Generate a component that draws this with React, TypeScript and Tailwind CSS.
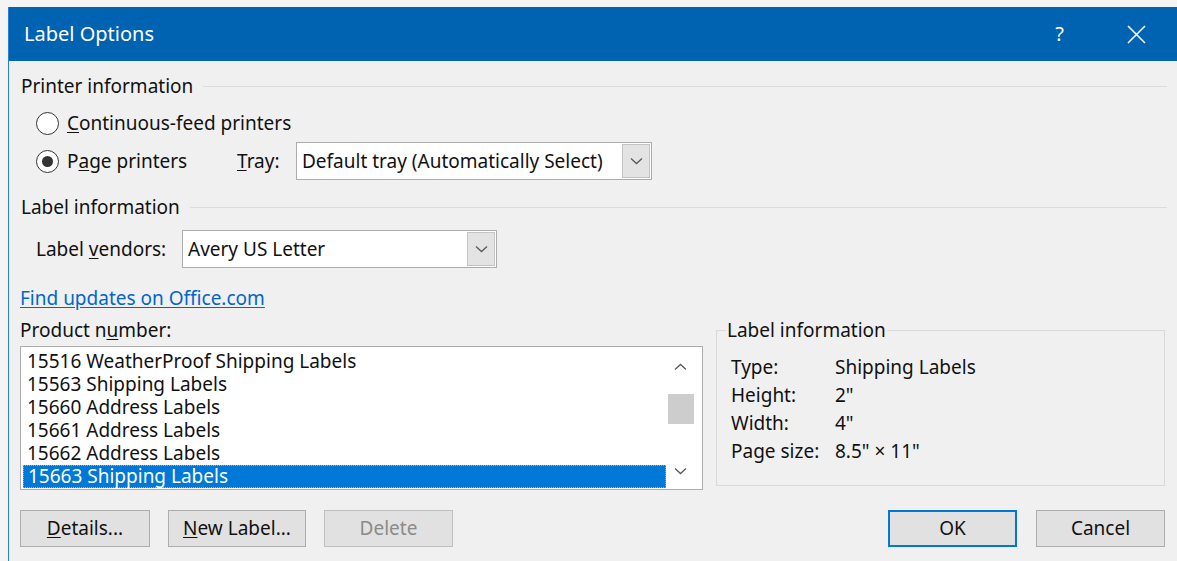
import { ReactNode } from "react";

const products = [
  "15516 WeatherProof Shipping Labels",
  "15563 Shipping Labels",
  "15660 Address Labels",
  "15661 Address Labels",
  "15662 Address Labels",
  "15663 Shipping Labels",
];

const details = [
  { label: "Type:", value: "Shipping Labels" },
  { label: "Height:", value: "2\"" },
  { label: "Width:", value: "4\"" },
  { label: "Page size:", value: "8.5\" × 11\"" },
];

const Chevron = ({ up = false }: { up?: boolean }) => (
  <svg width="13" height="8" viewBox="0 0 13 8" className={up ? "rotate-180" : ""}>
    <path d="M1 1.5 L6.5 6.5 L12 1.5" fill="none" stroke="#5a5a5a" strokeWidth="1.3" />
  </svg>
);

const SectionHeader = ({ title }: { title: string }) => (
  <div className="flex h-[24px] items-center gap-[10px] pl-[1px]">
    <span className="whitespace-nowrap">{title}</span>
    <div className="h-px flex-1 bg-[#dcdcdc]" />
  </div>
);

const Radio = ({ checked, children }: { checked?: boolean; children: ReactNode }) => (
  <div className="flex items-center gap-[8px]">
    <span className="flex h-[23px] w-[23px] items-center justify-center rounded-full border border-[#333] bg-white">
      {checked && <span className="h-[11px] w-[11px] rounded-full bg-[#333]" />}
    </span>
    <span className="whitespace-nowrap">{children}</span>
  </div>
);

const ComboBox = ({ value, width }: { value: string; width: string }) => (
  <div className={`flex h-[38px] ${width} border border-[#adadad] bg-white`}>
    <div className="flex flex-1 items-center pl-[5px] whitespace-nowrap">{value}</div>
    <div className="m-[1px] flex w-[28px] items-center justify-center border border-[#c4c4c4] bg-[#e3e3e3]">
      <Chevron />
    </div>
  </div>
);

const Button = ({
  children,
  width,
  primary,
  disabled,
}: {
  children: ReactNode;
  width: string;
  primary?: boolean;
  disabled?: boolean;
}) => (
  <button
    className={`flex h-[37px] ${width} items-center justify-center bg-[#e1e1e1] ${
      primary
        ? "border-2 border-[#0078d7]"
        : disabled
        ? "border border-[#bfbfbf] text-[#8a8a8a]"
        : "border border-[#adadad]"
    }`}
  >
    {children}
  </button>
);

export default function App() {
  return (
    <div className="h-[561px] w-[1177px] overflow-hidden bg-[#f4f4f4] pl-[8px] pt-[7px] font-['Noto_Sans','Open_Sans',sans-serif] text-[19px] leading-none text-[#111]">
      <div className="h-full border-l border-[#2c7ed0] bg-[#f0f0f0]">
        {/* title bar */}
        <div className="flex h-[54px] items-center bg-[#0063b1] pl-[15px] text-white">
          <span className="text-[20px]">Label Options</span>
          <span className="ml-auto mr-[63px] text-[20px]">?</span>
          <svg width="19" height="19" viewBox="0 0 19 19" className="mr-[31px]">
            <path d="M1 1 L18 18 M18 1 L1 18" stroke="white" strokeWidth="1.6" />
          </svg>
        </div>

        <div className="pl-[11px] pr-[10px] pt-[13px]">
          <SectionHeader title="Printer information" />
          <div className="pl-[16px] pt-[6px]">
            <div className="flex h-[38px] items-center">
              <Radio>
                <u className="underline-offset-2">C</u>ontinuous-feed printers
              </Radio>
            </div>
            <div className="flex h-[38px] items-center">
              <div className="w-[201px]">
                <Radio checked>
                  P<u className="underline-offset-2">a</u>ge printers
                </Radio>
              </div>
              <span className="w-[59px]">
                <u className="underline-offset-2">T</u>ray:
              </span>
              <ComboBox value="Default tray (Automatically Select)" width="w-[356px]" />
            </div>
          </div>

          <div className="mt-[15px]">
            <SectionHeader title="Label information" />
          </div>
          <div className="mt-[11px] flex h-[38px] items-center pl-[16px]">
            <span className="w-[146px] whitespace-nowrap">
              Label <u className="underline-offset-2">v</u>endors:
            </span>
            <ComboBox value="Avery US Letter" width="w-[315px]" />
          </div>

          <div className="mt-[18px] flex h-[24px] items-center">
            <span className="text-[#0066cc] underline underline-offset-2">Find updates on Office.com</span>
          </div>

          {/* product list and details */}
          <div className="mt-[8px] flex gap-[13px]">
            <div className="w-[683px]">
              <div className="flex h-[24px] items-center">
                Product n<u className="underline-offset-2">u</u>mber:
              </div>
              <div className="mt-[4px] flex h-[144px] border border-[#adadad] bg-white">
                <div className="flex-1 pl-[2px] pt-[3px]">
                  {products.map((p, i) => (
                    <div
                      key={p}
                      className={`flex h-[23px] items-center pl-[4px] ${
                        i === products.length - 1
                          ? "border border-dotted border-[#e8a050] bg-[#0078d7] text-white"
                          : ""
                      }`}
                    >
                      {p}
                    </div>
                  ))}
                </div>
                <div className="flex w-[36px] flex-col items-center pr-[7px]">
                  <div className="flex h-[30px] items-end justify-center pb-[6px]">
                    <Chevron up />
                  </div>
                  <div className="mt-[17px] h-[30px] w-[26px] bg-[#cdcdcd]" />
                  <div className="flex-1" />
                  <div className="flex h-[30px] items-start justify-center pt-[8px]">
                    <Chevron />
                  </div>
                </div>
              </div>
            </div>

            <fieldset className="h-[168px] w-[449px] border border-[#d9d9d9]">
              <legend className="ml-[9px] h-[24px] px-[1px] leading-[24px]">Label information</legend>
              <div className="pl-[14px] pt-[11px]">
                {details.map((d) => (
                  <div key={d.label} className="flex h-[28px] items-center">
                    <span className="w-[104px]">{d.label}</span>
                    <span>{d.value}</span>
                  </div>
                ))}
              </div>
            </fieldset>
          </div>

          {/* dialog buttons */}
          <div className="mt-[20px] flex pr-[2px]">
            <div className="flex gap-[18px]">
              <Button width="w-[130px]">
                <u className="underline-offset-2">D</u>etails...
              </Button>
              <Button width="w-[138px]">
                <u className="underline-offset-2">N</u>ew Label...
              </Button>
              <Button width="w-[129px]" disabled>
                Delete
              </Button>
            </div>
            <div className="ml-auto flex gap-[19px]">
              <Button width="w-[129px]" primary>
                OK
              </Button>
              <Button width="w-[129px]">Cancel</Button>
            </div>
          </div>
        </div>
      </div>
    </div>
  );
}
